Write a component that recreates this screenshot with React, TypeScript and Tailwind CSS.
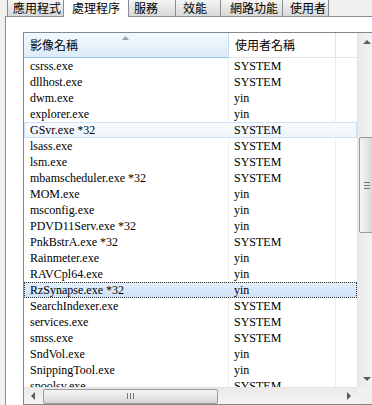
const rows: { name: string; user: string; state?: 'hot' | 'sel' }[] = [
  { name: 'csrss.exe', user: 'SYSTEM' },
  { name: 'dllhost.exe', user: 'SYSTEM' },
  { name: 'dwm.exe', user: 'yin' },
  { name: 'explorer.exe', user: 'yin' },
  { name: 'GSvr.exe *32', user: 'SYSTEM', state: 'hot' },
  { name: 'lsass.exe', user: 'SYSTEM' },
  { name: 'lsm.exe', user: 'SYSTEM' },
  { name: 'mbamscheduler.exe *32', user: 'SYSTEM' },
  { name: 'MOM.exe', user: 'yin' },
  { name: 'msconfig.exe', user: 'yin' },
  { name: 'PDVD11Serv.exe *32', user: 'yin' },
  { name: 'PnkBstrA.exe *32', user: 'SYSTEM' },
  { name: 'Rainmeter.exe', user: 'yin' },
  { name: 'RAVCpl64.exe', user: 'yin' },
  { name: 'RzSynapse.exe *32', user: 'yin', state: 'sel' },
  { name: 'SearchIndexer.exe', user: 'SYSTEM' },
  { name: 'services.exe', user: 'SYSTEM' },
  { name: 'smss.exe', user: 'SYSTEM' },
  { name: 'SndVol.exe', user: 'yin' },
  { name: 'SnippingTool.exe', user: 'yin' },
  { name: 'spoolsv.exe', user: 'SYSTEM' },
]

const cjk = { fontFamily: '"Noto Sans CJK TC", "Noto Sans", sans-serif' }
const serif = { fontFamily: '"Liberation Serif", "Noto Sans CJK TC", serif' }

function Arrow({ dir }: { dir: 'up' | 'down' | 'left' | 'right' }) {
  const pts = {
    up: '0,5 4,1 8,5',
    down: '0,1 4,5 8,1',
    left: '5,0 1,4 5,8',
    right: '1,0 5,4 1,8',
  }[dir]
  const wide = dir === 'up' || dir === 'down'
  return (
    <svg width={wide ? 8 : 6} height={wide ? 6 : 8} viewBox={wide ? '0 0 8 6' : '0 0 6 8'}>
      <polygon points={pts} fill="#5d5d5d" />
    </svg>
  )
}

function Tab({ label, w, pl, active }: { label: string; w: number; pl: number; active?: boolean }) {
  return (
    <div
      style={{ ...cjk, width: w, paddingLeft: pl }}
      className={
        active
          ? 'h-[17px] -mb-px relative z-10 bg-white border-r border-[#898c95] text-[12px] leading-[15px] text-black'
          : 'h-[16px] border-r border-[#898c95] bg-gradient-to-b from-[#f5f5f5] to-[#d8d8d8] text-[12px] leading-[15px] text-black'
      }
    >
      {label}
    </div>
  )
}

export default function App() {
  return (
    <div className="w-[372px] h-[405px] bg-[#f0f0f0] overflow-hidden flex flex-col">
      <div className="flex pl-[7px] h-[16px] shrink-0">
        <div className="border-l border-[#898c95] flex">
          <Tab label="應用程式" w={56} pl={5} />
          <Tab label="處理程序" w={65} pl={8} active />
          <Tab label="服務" w={47} pl={5} />
          <Tab label="效能" w={45} pl={7} />
          <Tab label="網路功能" w={62} pl={9} />
          <Tab label="使用者" w={46} pl={7} />
        </div>
      </div>

      <div className="flex-1 ml-[5px] border-l border-t border-[#898c95] bg-white pt-[15px] pl-[17px]">
        <div className="w-[353px] h-[373px] border border-[#828790] flex">
          <div className="w-[333px] flex flex-col">
            {/* header */}
            <div className="h-[25px] flex shrink-0 text-[12px] text-black" style={cjk}>
              <div className="w-[205px] relative flex items-center pl-[6px] bg-gradient-to-b from-[#f3f9fd] to-[#dcecf9] border-r border-[#c5dcf0] border-b border-b-[#96c4e8]">
                影像名稱
                <svg className="absolute left-[98px] top-[3px]" width="7" height="4" viewBox="0 0 7 4">
                  <polygon points="0,4 3.5,0 7,4" fill="#97a5b4" />
                </svg>
              </div>
              <div className="w-[107px] flex items-center pl-[6px] bg-white border-r border-[#e3e3e3] border-b border-b-[#e5e5e5]">
                使用者名稱
              </div>
              <div className="flex-1 bg-white border-b border-[#e5e5e5]" />
            </div>

            {/* rows */}
            <div className="flex-1 overflow-hidden relative">
              <div className="absolute top-0 bottom-0 left-[204px] w-px bg-[#eeeeee]" />
              <div className="absolute top-0 bottom-0 left-[311px] w-px bg-[#eeeeee]" />
              <div className="flex flex-col">
                {rows.map((r) => (
                  <div
                    key={r.name}
                    style={serif}
                    className={
                      'h-[16px] shrink-0 flex text-[12px] leading-[14px] text-black relative ' +
                      (r.state === 'hot'
                        ? 'bg-gradient-to-b from-[#f8fbfe] to-[#eef5fc] border border-[#cfe2f5]'
                        : r.state === 'sel'
                          ? 'bg-gradient-to-b from-[#e3effc] to-[#cfe2f9] border border-dotted border-[#333]'
                          : 'border border-transparent')
                    }
                  >
                    <div className="w-[204px] pl-[5px] whitespace-nowrap">{r.name}</div>
                    <div className="w-[107px] pl-[5px]">{r.user}</div>
                  </div>
                ))}
              </div>
            </div>

            {/* horizontal scrollbar */}
            <div className="h-[17px] shrink-0 flex items-center bg-gradient-to-b from-[#eaeaea] to-[#f4f4f4] border-t border-[#e3e3e3]">
              <div className="w-[17px] flex justify-center">
                <Arrow dir="left" />
              </div>
              <div className="ml-[2px] w-[175px] h-[15px] rounded-[2px] border border-[#9a9a9a] bg-gradient-to-b from-[#f5f5f5] via-[#e8e8e8] to-[#d4d4d4] flex justify-center items-center gap-[2px]">
                <span className="w-px h-[6px] bg-[#777]" />
                <span className="w-px h-[6px] bg-[#777]" />
                <span className="w-px h-[6px] bg-[#777]" />
              </div>
              <div className="flex-1" />
              <div className="w-[17px] flex justify-center">
                <Arrow dir="right" />
              </div>
            </div>
          </div>

          {/* vertical scrollbar */}
          <div className="w-[18px] flex flex-col">
            <div className="flex-1 flex flex-col bg-gradient-to-r from-[#eaeaea] to-[#f4f4f4] border-l border-[#e3e3e3]">
              <div className="h-[17px] flex items-center justify-center">
                <Arrow dir="up" />
              </div>
              <div className="h-[87px]" />
              <div className="h-[96px] mx-[1px] rounded-[2px] border border-[#9a9a9a] bg-gradient-to-r from-[#f5f5f5] via-[#e8e8e8] to-[#d4d4d4] flex flex-col justify-center items-center gap-[2px]">
                <span className="w-[6px] h-px bg-[#777]" />
                <span className="w-[6px] h-px bg-[#777]" />
                <span className="w-[6px] h-px bg-[#777]" />
              </div>
              <div className="flex-1" />
              <div className="h-[17px] flex items-center justify-center">
                <Arrow dir="down" />
              </div>
            </div>
            <div className="h-[17px] bg-[#f0f0f0]" />
          </div>
        </div>
      </div>
    </div>
  )
}
